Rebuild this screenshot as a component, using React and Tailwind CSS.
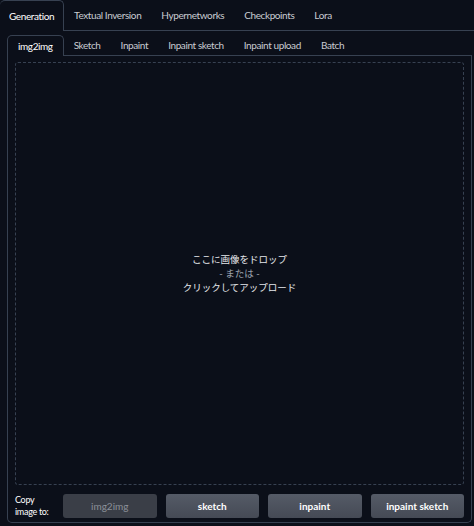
const font = { fontFamily: 'Lato, "Noto Sans CJK JP", sans-serif' };

const outerTabs = ["Generation", "Textual Inversion", "Hypernetworks", "Checkpoints", "Lora"];
const innerTabs = ["img2img", "Sketch", "Inpaint", "Inpaint sketch", "Inpaint upload", "Batch"];
const copyTargets = ["img2img", "sketch", "inpaint", "inpaint sketch"];

export default function App() {
  return (
    <div
      className="w-[474px] h-[526px] bg-[#0b0f19] text-[#e5e7eb] overflow-hidden flex flex-col"
      style={font}
    >
      {/* OUTER TABS */}
      <div className="flex h-[31px] shrink-0">
        {outerTabs.map((t, i) =>
          i === 0 ? (
            <div
              key={t}
              className="h-[31px] px-[9px] flex items-center text-[10px] tracking-[-0.4px] text-white border border-b-0 border-[#374151] rounded-t-[5px] border-l-0 bg-[#0b0f19]"
            >
              {t}
            </div>
          ) : (
            <div
              key={t}
              className="h-[31px] px-[10px] flex items-center text-[10px] tracking-[-0.4px] text-[#c9ccd2] border-b border-[#374151]"
            >
              {t}
            </div>
          )
        )}
        <div className="flex-1 border-b border-[#374151]" />
      </div>

      {/* INNER */}
      <div className="flex-1 flex flex-col pl-[7px] pr-[2px] pt-[4px] pb-[3px]">
        <div className="flex h-[21px] shrink-0">
          {innerTabs.map((t, i) =>
            i === 0 ? (
              <div
                key={t}
                className="h-[21px] px-[10px] flex items-center text-[10px] tracking-[-0.4px] text-white border border-b-0 border-[#374151] rounded-t-[5px]"
              >
                {t}
              </div>
            ) : (
              <div
                key={t}
                className="h-[21px] px-[10px] flex items-center text-[10px] tracking-[-0.4px] text-[#c9ccd2] border-b border-[#374151]"
              >
                {t}
              </div>
            )
          )}
          <div className="flex-1 border-b border-[#374151]" />
        </div>

        <div className="flex-1 flex flex-col border border-t-0 border-[#374151] rounded-b-[5px] px-[7px] pt-[6px] pb-[4px]">
          {/* DROP AREA */}
          <div className="flex-1 border border-dashed border-[#374151] rounded-[3px] flex flex-col items-center justify-center text-[9.5px] leading-[14px]">
            <div className="text-[#e5e7eb]">ここに画像をドロップ</div>
            <div className="text-[#9ca3af]">- または -</div>
            <div className="text-[#e5e7eb]">クリックしてアップロード</div>
          </div>

          {/* COPY */}
          <div className="flex items-center h-[24px] mt-[9px] shrink-0">
            <div className="w-[48px] text-[9px] leading-[12px] tracking-[-0.3px] text-white">
              Copy
              <br />
              image to:
            </div>
            <div className="flex-1 grid grid-cols-4 gap-[9px]">
              {copyTargets.map((t, i) => (
                <div
                  key={t}
                  className={
                    i === 0
                      ? "h-[24px] rounded-[3px] bg-[#3a3e47] text-[#8b9099] text-[10px] flex items-center justify-center"
                      : "h-[24px] rounded-[3px] bg-gradient-to-b from-[#555b67] to-[#454a55] text-white font-bold text-[10px] flex items-center justify-center"
                  }
                >
                  {t}
                </div>
              ))}
            </div>
          </div>
        </div>
      </div>
    </div>
  );
}
